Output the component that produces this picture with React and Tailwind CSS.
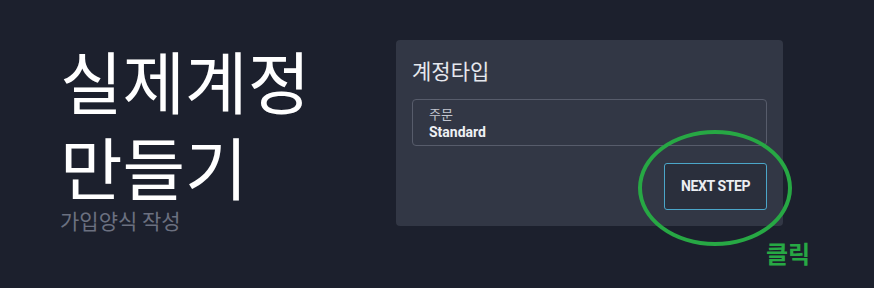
export default function App() {
  return (
    <div
      className="relative h-[288px] w-[874px] overflow-hidden bg-[#1c202d] flex"
      style={{ fontFamily: 'Roboto, "Noto Sans CJK KR", sans-serif' }}
    >
      {/* Left headline */}
      <div className="pl-[60px] pt-[37px] w-[396px] shrink-0">
        <h1 className="text-[68px] leading-[86px] font-normal text-white" style={{ fontFamily: '"Noto Sans CJK KR", sans-serif' }}>
          실제계정
          <br />
          만들기
        </h1>
        <p className="text-[21px] leading-[22px] text-[#6b7080]" style={{ fontFamily: '"Noto Sans CJK KR", sans-serif' }}>
          가입양식 작성
        </p>
      </div>

      {/* Card */}
      <div className="pt-[40px]">
        <div className="relative w-[387px] h-[186px] rounded-[4px] bg-[#323745] px-4 pt-[15px]">
          <h2 className="text-[21px] leading-[30px] text-[#e6e8ee]" style={{ fontFamily: '"Noto Sans CJK KR", sans-serif' }}>
            계정타입
          </h2>
          <div className="mt-[14px] h-[47px] rounded-[4px] border border-[#575c6b] pl-4 pt-[5px]">
            <div className="text-[13px] leading-[17px] text-[#c4c7d0]" style={{ fontFamily: '"Noto Sans CJK KR", sans-serif' }}>
              주문
            </div>
            <div className="text-[14px] leading-[20px] font-bold text-[#eef0f4]">Standard</div>
          </div>
          <div className="flex justify-end mt-[17px]">
            <button className="w-[103px] h-[47px] rounded-[3px] border border-[#4ba6c9] bg-[#2a2f3c] text-[14px] font-bold text-[#eceef2] tracking-[-0.4px]">
              NEXT STEP
            </button>
          </div>
        </div>
      </div>

      {/* Annotation */}
      <div className="absolute left-[638px] top-[130px] w-[154px] h-[116px] rounded-[50%] border-[4px] border-[#27a844]" />
      <div
        className="absolute left-[766px] top-[236px] text-[24px] leading-[34px] font-bold text-[#27a844]"
        style={{ fontFamily: '"Noto Sans CJK KR", sans-serif' }}
      >
        클릭
      </div>
    </div>
  )
}
